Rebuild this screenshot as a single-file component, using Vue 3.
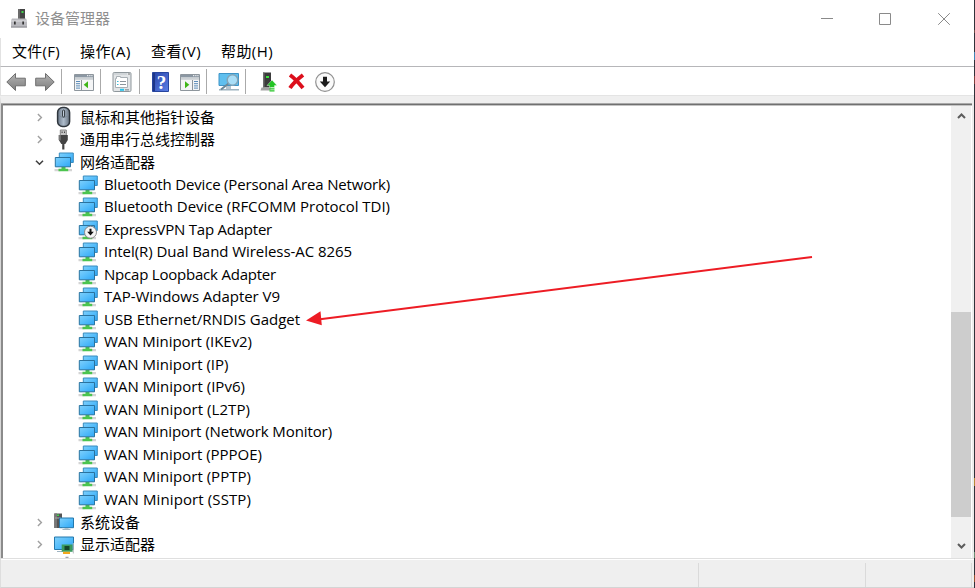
<script setup>
const menus = [
  { label: '文件(F)', width: 48 },
  { label: '操作(A)', width: 51 },
  { label: '查看(V)', width: 50 },
  { label: '帮助(H)', width: 52 },
]

const child = (label, width, disabled = false) => ({ label, width, disabled, icon: 'net', level: 2 })

const rows = [
  { label: '鼠标和其他指针设备', icon: 'mouse', level: 1 },
  { label: '通用串行总线控制器', icon: 'usb', level: 1 },
  { label: '网络适配器', icon: 'net', level: 1, open: true },
  child('Bluetooth Device (Personal Area Network)', 286),
  child('Bluetooth Device (RFCOMM Protocol TDI)', 286),
  child('ExpressVPN Tap Adapter', 168, true),
  child('Intel(R) Dual Band Wireless-AC 8265', 248),
  child('Npcap Loopback Adapter', 172),
  child('TAP-Windows Adapter V9', 176),
  child('USB Ethernet/RNDIS Gadget', 196),
  child('WAN Miniport (IKEv2)', 148),
  child('WAN Miniport (IP)', 124.5),
  child('WAN Miniport (IPv6)', 141),
  child('WAN Miniport (L2TP)', 146),
  child('WAN Miniport (Network Monitor)', 228),
  child('WAN Miniport (PPPOE)', 158),
  child('WAN Miniport (PPTP)', 147),
  child('WAN Miniport (SSTP)', 147),
  { label: '系统设备', icon: 'system', level: 1 },
  { label: '显示适配器', icon: 'display', level: 1 },
]

const vFit = (el, { value }) => {
  if (!value) return
  el.style.letterSpacing = '0px'
  const natural = el.getBoundingClientRect().width
  el.style.letterSpacing = `${(value - natural) / el.textContent.length}px`
}
</script>

<template>
  <div class="window">
    <svg class="defs" width="0" height="0" aria-hidden="true">
      <defs>
        <linearGradient id="screen" x1="0" y1="0" x2="1" y2="1">
          <stop offset="0" stop-color="#7fd0fb" />
          <stop offset=".5" stop-color="#55bdfb" />
          <stop offset="1" stop-color="#2ea6f5" />
        </linearGradient>
        <linearGradient id="steel" x1="0" y1="0" x2="0" y2="1">
          <stop offset="0" stop-color="#b4b4b4" />
          <stop offset="1" stop-color="#7d7d7d" />
        </linearGradient>
        <linearGradient id="book" x1="0" y1="0" x2="1" y2="1">
          <stop offset="0" stop-color="#2644a8" />
          <stop offset="1" stop-color="#5c7fe6" />
        </linearGradient>
        <linearGradient id="mouse" x1="0" y1="0" x2="1" y2="0">
          <stop offset="0" stop-color="#6c7a8a" />
          <stop offset=".5" stop-color="#aebccb" />
          <stop offset="1" stop-color="#66727f" />
        </linearGradient>
      </defs>
    </svg>

    <header class="titlebar">
      <svg class="app-icon" viewBox="0 0 18 20">
        <path d="M8 0h7v11H8z" fill="#444" />
        <path d="M8 0h2v11H8z" fill="#6b6b6b" />
        <path d="M11.500 2h2v2h-2z" fill="#42d34c" />
        <path d="M2 9.500h14l1 2v7H1v-7z" fill="#b9b9be" />
        <path d="M1 11.500h16v1H1z" fill="#dedee2" />
        <path d="M1 17.500h16v1H1z" fill="#8a8a90" />
        <path d="M4 12.500h1.700v3H4zM12.300 12.500H14v3h-1.700z" fill="#333" />
      </svg>
      <span class="title">设备管理器</span>
      <div class="controls">
        <svg viewBox="0 0 14 14"><path d="M1 6.500h12" /></svg>
        <svg viewBox="0 0 14 14"><path d="M1.500 1.500h11v11h-11z" /></svg>
        <svg viewBox="0 0 14 14"><path d="M1.200 1.200l11.600 11.600M12.800 1.200L1.200 12.800" /></svg>
      </div>
    </header>

    <nav class="menubar">
      <span v-for="m in menus" :key="m.label" v-fit="m.width">{{ m.label }}</span>
    </nav>

    <div class="toolbar">
      <svg class="t-back" viewBox="0 0 20 20">
        <path d="M.8 10L9.500 1.500v4.700h9.800v7.600H9.500v4.700z" fill="url(#steel)" stroke="#6f6f6f" />
      </svg>
      <svg class="t-fwd" viewBox="0 0 20 20">
        <path d="M19.200 10l-8.700-8.500v4.700H.7v7.600h9.800v4.700z" fill="url(#steel)" stroke="#6f6f6f" />
      </svg>
      <i class="sep s1" />
      <svg class="t-tree" viewBox="0 0 20 20">
        <path d="M.5 2.500h19v16H.5z" fill="#f4f5f6" stroke="#8e969d" />
        <path d="M1 3h18v2.500H1z" fill="#8b97a3" />
        <path d="M13 3.700h1.300M15.200 3.700h1.300M17.300 3.700h1.200" stroke="#fff" />
        <path d="M1 5.500h18v2.300H1z" fill="#cbd0d4" />
        <path d="M7.500 8v10" stroke="#8e969d" />
        <path d="M2 9.500h4M2 11.700h4M2 13.900h4M2 16.100h4" stroke="#5b8cb9" />
        <path d="M14 9.300v7l-4.300-3.500z" fill="#3fb618" />
      </svg>
      <i class="sep s2" />
      <svg class="t-props" viewBox="0 0 20 20">
        <rect x="1" y=".5" width="18" height="19" rx="1.200" fill="#e2e5e7" stroke="#8f979c" />
        <path d="M2 2h13" stroke="#bfc5c9" /><path d="M16 2h2" stroke="#777" />
        <path d="M3.500 6.500h1v-2h4v1h7v10h-12z" fill="#fff" stroke="#a8afb4" />
        <path d="M5 9.500h1.500M5 12.500h1.500" stroke="#36b9d8" />
        <path d="M8 9.500h6M8 12.500h6" stroke="#8c959b" />
        <path d="M8 17.800h4" stroke="#25c5ee" stroke-width="2" />
        <path d="M13 17.800h4" stroke="#9aa3a8" stroke-width="1.500" />
      </svg>
      <i class="sep s3" />
      <svg class="t-help" viewBox="0 0 17 20">
        <path d="M.5.5h16v19H.5z" fill="url(#book)" stroke="#27459f" />
        <path d="M1 1h2v18H1z" fill="#1d3689" />
        <text x="9.600" y="16.500" text-anchor="middle">?</text>
      </svg>
      <svg class="t-action" viewBox="0 0 20 20">
        <path d="M.5 2.500h19v16H.5z" fill="#f4f5f6" stroke="#8e969d" />
        <path d="M1 3h18v2.500H1z" fill="#8b97a3" />
        <path d="M13 3.700h1.300M15.200 3.700h1.300M17.300 3.700h1.200" stroke="#fff" />
        <path d="M1 5.500h18v2.300H1z" fill="#cbd0d4" />
        <path d="M12.500 8v10" stroke="#8e969d" />
        <path d="M14 9.500h4M14 11.700h4M14 13.900h4M14 16.100h4" stroke="#5b8cb9" />
        <path d="M5 9.300v7l4.300-3.500z" fill="#3fb618" />
      </svg>
      <i class="sep s4" />
      <svg class="t-scan" viewBox="0 0 22 20">
        <path d="M1 1.500h19.500v12H1z" fill="#5fbfee" stroke="#3e94c7" />
        <path d="M8 14h5v3H8z" fill="#b5c4ce" />
        <path d="M1 17.800h20" stroke="#8fa7b5" stroke-width="1.300" />
        <path d="M10.500 11.500L3 17.500" stroke="#6d8796" stroke-width="2" />
        <circle cx="14.500" cy="8" r="5.300" fill="#a9def7" stroke="#82a5b8" stroke-width="1.500" />
      </svg>
      <i class="sep s5" />
      <svg class="t-update" viewBox="0 0 18 20">
        <path d="M3 .5h8v15H3z" fill="#3b3b3b" />
        <path d="M3 .5h1.500v15H3z" fill="#6d6d6d" />
        <path d="M6 4h3v2H6z" fill="#39e13c" />
        <path d="M1.500 15.500h9v3H.5z" fill="#a3a3a3" />
        <path d="M12 8l5 5.500h-2.500v2h-5v-2H7z" fill="#22c423" stroke="#fff" stroke-width=".4" />
        <path d="M9.500 16.800h5M9.500 18.900h5" stroke="#22c423" stroke-width="1.300" />
      </svg>
      <svg class="t-remove" viewBox="0 0 17 17">
        <path d="M2 2c3.500 2.500 8.500 7.500 13 13M15 2C10.500 5.500 5 10.500 2 15" stroke="#dc0f1c" stroke-width="3.900" fill="none" />
      </svg>
      <svg class="t-disable" viewBox="0 0 20 20">
        <circle cx="10" cy="10" r="9.300" fill="#fafafa" stroke="#909090" stroke-width="1.200" />
        <path d="M8 4.800h4v4.700h3.200L10 15.300 4.800 9.500H8z" fill="#1b1b1b" />
      </svg>
    </div>

    <main class="pane">
      <ul class="tree">
        <li v-for="r in rows" :key="r.label" :class="'level' + r.level">
          <svg v-if="r.level === 1" class="chev" :class="{ open: r.open }" viewBox="0 0 9 9">
            <path v-if="r.open" d="M1 2.700l3.500 3.500L8 2.700" />
            <path v-else d="M2.900 1l3.500 3.500L2.900 8" />
          </svg>

          <svg v-if="r.icon === 'net'" class="dev" viewBox="0 0 20 20">
            <path d="M5.300 1h14v9.500h-14z" fill="url(#screen)" stroke="#3a8cbf" />
            <path d="M.5 17h6v2.200h-6zM14 17h4v2.200h-4z" fill="#d4d4d4" />
            <path d="M7.500 15h4v1.700h2.700v2.500H4.500v-2.500h3z" fill="#4cc44f" />
            <path d="M1.300 5.500h15.200v9.300H1.300z" fill="url(#screen)" stroke="#2a739f" />
            <template v-if="r.disabled">
              <circle cx="12.500" cy="12.200" r="6" fill="#f5f5f5" stroke="#888" />
              <path d="M11.500 8.700h2v3h2.300l-3.300 3.700-3.300-3.700h2.300z" fill="#111" />
            </template>
          </svg>
          <svg v-else-if="r.icon === 'mouse'" class="dev" viewBox="0 0 20 20">
            <rect x="3.600" y=".6" width="12" height="18.800" rx="5" fill="url(#mouse)" stroke="#2f363d" stroke-width="1.500" />
            <path d="M4.800 8Q9.600 13 14.400 8" fill="none" stroke="#7d8b99" />
            <rect x="8.600" y="3" width="2" height="7" rx="1" fill="#d2e1ef" stroke="#2d3339" />
          </svg>
          <svg v-else-if="r.icon === 'usb'" class="dev" viewBox="0 0 20 20">
            <path d="M6.300 0h6v5.500h-6z" fill="#c4c4c4" stroke="#888" />
            <path d="M7.600 1.500h1V3h-1zM10 1.500h1V3h-1z" fill="#444" />
            <path d="M4.800 5h9v5l-2.500 4h-4l-2.500-4z" fill="#444" />
            <path d="M4.800 5h2v5.500l-2-.5z" fill="#777" />
            <path d="M9.300 13.500V19.500" stroke="#444" stroke-width="2.200" />
          </svg>
          <svg v-else-if="r.icon === 'system'" class="dev" viewBox="0 0 20 20">
            <path d="M.3 1.500H8V16H.3z" fill="#555" />
            <path d="M.3 1.500H3V16H.3z" fill="#777" />
            <path d="M3 2.500h2V4H3z" fill="#42d34c" />
            <path d="M1 6h6" stroke="#aaa" />
            <path d="M5.500 6h14v9.700h-14z" fill="url(#screen)" stroke="#2478ac" />
            <path d="M10.500 16.200h4v.8h2v1H8.500v-1h2z" fill="#a5b6c0" />
          </svg>
          <svg v-else class="dev" viewBox="0 0 20 20">
            <path d="M.5 2h19v12.500H.5z" fill="url(#screen)" stroke="#2478ac" />
            <path d="M3 16.500h5" stroke="#9fb4c2" />
            <path d="M7.700 9.500h11v7.300h-11z" fill="#3a9a5e" />
            <path d="M19.300 8v10.500" stroke="#b4bbc0" />
            <path d="M10.500 11h5v4h-5z" fill="#15452a" />
            <path d="M9 16.800h7V19H9z" fill="#f2a81d" />
            <path d="M11.500 22.300h3" stroke="#8a8f96" />
          </svg>
          <span v-fit="r.width" class="label">{{ r.label }}</span>
        </li>
      </ul>
      <aside class="scroll">
        <svg viewBox="0 0 9 6"><path d="M1 5l3.500-3.500L8 5" /></svg>
        <div class="thumb" />
        <svg viewBox="0 0 9 6"><path d="M1 1l3.500 3.500L8 1" /></svg>
      </aside>
      <svg class="arrow" viewBox="0 0 510 70">
        <path d="M506 2L12 64.500" stroke="#ed1c24" stroke-width="2" />
        <path d="M0 65.500L14.500 56.300l1.300 14z" fill="#ed1c24" />
      </svg>
    </main>

    <footer class="status"><i /><i /><i /></footer>
  </div>
</template>

<style>
body {
  overflow: hidden;
  background: #fff;
}
</style>

<style scoped>
.window {
  box-sizing: border-box;
  width: 975px;
  height: 588px;
  padding-right: 1px;
  display: flex;
  flex-direction: column;
  position: relative;
  background:
    linear-gradient(#30323a 0 30px, #6d4a44 30px 33px, #30323a 33px 52px, #3f86b8 52px 60px, #30323a 60px 76px,
      #83403c 76px 84px, #30323a 84px 478px, #b88a3a 478px 486px, #30323a 486px 552px, #6b8f74 552px 558px,
      #30323a 558px 575px, #96512f 575px 582px, #30323a 582px) right / 1px 100% no-repeat,
    #fff;
  font-family: 'Open Sans', 'Noto Sans CJK SC', sans-serif;
  font-size: 15px;
  color: #000;
}
svg {
  display: block;
  flex: none;
  fill: none;
  overflow: visible;
}
.defs {
  position: absolute;
}
.titlebar {
  height: 38px;
  flex: none;
  display: flex;
  align-items: center;
  padding-left: 10px;
}
.app-icon {
  width: 18px;
  height: 20px;
}
.title {
  margin-left: 7px;
  color: #8f8f8f;
  line-height: 36px;
  padding-bottom: 2px;
}
.controls {
  display: flex;
  margin: 0 23px 0 auto;
}
.controls svg {
  width: 14px;
  height: 14px;
  margin-left: 45px;
  stroke: #8a8a8a;
}
.controls svg:nth-child(2) {
  margin-left: 44px;
}
.menubar {
  height: 28px;
  box-sizing: border-box;
  flex: none;
  display: flex;
  padding-left: 11px;
  gap: 20px;
  line-height: 26px;
  white-space: pre;
  border-left: 1px solid #e2e2e2;
}
.toolbar {
  height: 30px;
  box-sizing: border-box;
  flex: none;
  display: flex;
  align-items: center;
  border-top: 1px solid #b6b6b9;
  border-bottom: 1px solid #e4e4e4;
  border-left: 1px solid #e2e2e2;
  padding: 1px 0 0 5px;
}
.toolbar svg {
  width: 20px;
  height: 20px;
}
.sep {
  width: 1px;
  height: 25px;
  background: #aaa;
}
.toolbar .t-fwd { margin-left: 9px; }
.s1 { margin-left: 6px; }
.toolbar .t-tree { margin-left: 12px; }
.s2 { margin-left: 6px; }
.toolbar .t-props { margin-left: 11px; }
.s3 { margin-left: 7px; }
.toolbar .t-help { width: 17px; margin-left: 12px; }
.t-help text {
  font: bold 19px 'Liberation Serif', serif;
  fill: #fff;
}
.toolbar .t-action { margin-left: 11px; }
.s4 { margin-left: 6px; }
.toolbar .t-scan { width: 22px; margin-left: 11px; }
.s5 { margin-left: 5px; }
.toolbar .t-update { width: 18px; margin-left: 14px; }
.toolbar .t-remove { width: 17px; height: 17px; margin-left: 10px; }
.toolbar .t-disable { margin-left: 10px; }
.pane {
  flex: none;
  box-sizing: border-box;
  height: 462px;
  border-top: 7px solid #efefef;
  border-right: 2px solid #ececec;
  border-left: 1px solid #d8d8d8;
  box-shadow: inset 0 1px #a9a9a9, inset 0 2px #707070, inset 0 3px #c4c4c4;
  padding-top: 3px;
  display: flex;
  position: relative;
}
.tree {
  flex: 1;
  list-style: none;
  margin: -2px 0 0;
  padding: 2px 0 0;
  box-sizing: border-box;
  border-left: 2px solid #8b8b8b;
}
.tree li {
  height: 22.500px;
  display: flex;
  align-items: center;
  padding-left: 75px;
}
.tree li.level1 {
  padding-left: 32px;
}
.chev {
  width: 9px;
  height: 9px;
  margin-right: 10px;
  stroke: #a0a0a0;
  stroke-width: 1.400;
}
.chev.open {
  stroke: #404040;
  stroke-width: 1.600;
}
.dev {
  width: 20px;
  height: 20px;
}
.label {
  margin-left: 6px;
  line-height: 22px;
  padding-bottom: 2px;
  white-space: pre;
}
.level1 .label {
  padding-bottom: 1px;
}
.scroll {
  width: 20px;
  box-sizing: border-box;
  margin-right: 1px;
  background: #f0f0f0;
  display: flex;
  flex-direction: column;
  align-items: center;
  padding: 7px 0 9px;
}
.scroll svg {
  width: 9px;
  height: 6px;
  stroke: #5c5c5c;
  stroke-width: 2;
}
.thumb {
  width: 20px;
  height: 205px;
  margin: 193px 0 auto;
  background: #cdcdcd;
}
.arrow {
  position: absolute;
  left: 305px;
  top: 152px;
  width: 510px;
  height: 70px;
}
.status {
  flex: 1;
  box-sizing: border-box;
  display: grid;
  grid-template-columns: 698px 167px 106px;
  background: #efefef;
  border-top: 1px solid #dfdfdf;
  border-bottom: 1px solid #d4d4d4;
  border-left: 1px solid #dedede;
  box-shadow: inset 0 1px #fff;
  padding-top: 4px;
}
.status i {
  border-right: 1px solid #dadada;
}
</style>
